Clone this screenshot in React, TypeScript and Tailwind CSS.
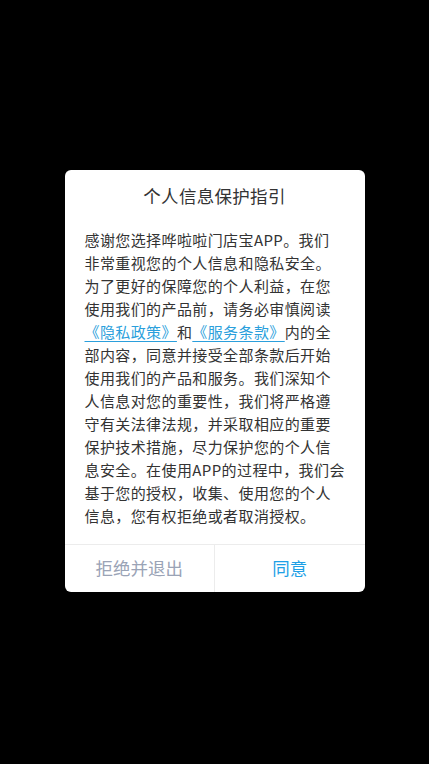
const lines: React.ReactNode[] = [
  "感谢您选择哗啦啦门店宝APP。我们",
  "非常重视您的个人信息和隐私安全。",
  "为了更好的保障您的个人利益，在您",
  "使用我们的产品前，请务必审慎阅读",
  <>
    <a className="text-[#2b9fdc] underline underline-offset-[3px]">《隐私政策》</a>
    和
    <a className="text-[#2b9fdc] underline underline-offset-[3px]">《服务条款》</a>
    内的全
  </>,
  "部内容，同意并接受全部条款后开始",
  "使用我们的产品和服务。我们深知个",
  "人信息对您的重要性，我们将严格遵",
  "守有关法律法规，并采取相应的重要",
  "保护技术措施，尽力保护您的个人信",
  "息安全。在使用APP的过程中，我们会",
  "基于您的授权，收集、使用您的个人",
  "信息，您有权拒绝或者取消授权。",
];

const PrivacyDialog = () => {
  return (
    <div className="w-[300px] rounded-[6px] bg-white overflow-hidden">
      {/* title */}
      <h1 className="pt-[14px] text-center text-[17.5px] leading-6 text-[#333] tracking-[0.3px]">
        个人信息保护指引
      </h1>

      {/* body */}
      <div className="px-5 pt-5 pb-[17px] text-[15px] leading-[23px] text-[#333] tracking-[0.4px]">
        {lines.map((line, i) => (
          <p key={i} className="whitespace-nowrap">
            {line}
          </p>
        ))}
      </div>

      {/* buttons */}
      <div className="flex h-[48px] border-t border-[#ececec]">
        <button className="flex-1 flex items-center justify-center text-[17.5px] text-[#9aa3b6] border-r border-[#ececec]">
          拒绝并退出
        </button>
        <button className="flex-1 flex items-center justify-center text-[17.5px] text-[#1ea0e6]">
          同意
        </button>
      </div>
    </div>
  );
};

export default function App() {
  return (
    <div
      className="w-[429px] h-[764px] bg-black flex items-start justify-center pt-[170px]"
      style={{ fontFamily: '"Noto Sans CJK SC", "Noto Sans", sans-serif' }}
    >
      <PrivacyDialog />
    </div>
  );
}
